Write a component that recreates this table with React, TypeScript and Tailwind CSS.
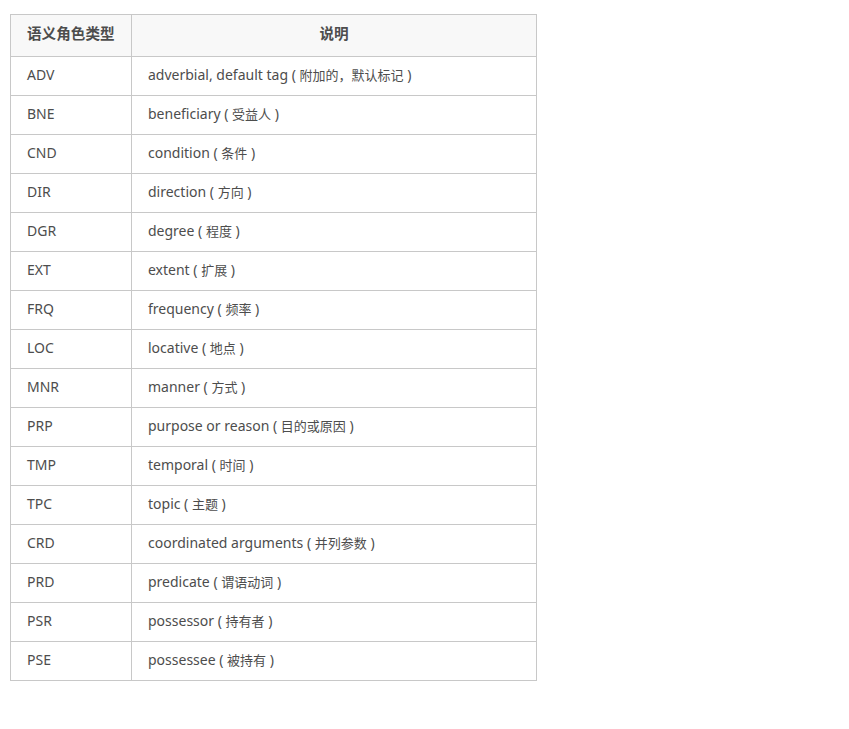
import React from "react";

const rows: [string, string, string][] = [
  ["ADV", "adverbial, default tag", "附加的，默认标记"],
  ["BNE", "beneficiary", "受益人"],
  ["CND", "condition", "条件"],
  ["DIR", "direction", "方向"],
  ["DGR", "degree", "程度"],
  ["EXT", "extent", "扩展"],
  ["FRQ", "frequency", "频率"],
  ["LOC", "locative", "地点"],
  ["MNR", "manner", "方式"],
  ["PRP", "purpose or reason", "目的或原因"],
  ["TMP", "temporal", "时间"],
  ["TPC", "topic", "主题"],
  ["CRD", "coordinated arguments", "并列参数"],
  ["PRD", "predicate", "谓语动词"],
  ["PSR", "possessor", "持有者"],
  ["PSE", "possessee", "被持有"],
];

export default function App() {
  return (
    <div className="w-[849px] h-[729px] bg-white pl-[10px] pt-[14px] text-[14px] text-[#4d4d4d] font-['Noto_Sans','Noto_Sans_CJK_SC',sans-serif]">
      <table className="border-collapse w-[527px] table-fixed">
        <colgroup>
          <col className="w-[121px]" />
          <col />
        </colgroup>
        <thead>
          <tr className="h-[42px] bg-[#f8f8f8] text-[14.6px]">
            {/* header */}
            <th className="border border-[#c8c8c8] px-4 pb-[3px] text-left font-bold">语义角色类型</th>
            <th className="border border-[#c8c8c8] px-4 pb-[3px] text-center font-bold">说明</th>
          </tr>
        </thead>
        <tbody>
          {rows.map(([tag, en, zh]) => (
            <tr key={tag} className="h-[39px]">
              <td className="border border-[#c8c8c8] px-4 pb-[3px]">{tag}</td>
              <td className="border border-[#c8c8c8] px-4 pb-[3px]">
                {en} ( <span className="text-[13px]">{zh}</span> )
              </td>
            </tr>
          ))}
        </tbody>
      </table>
    </div>
  );
}
